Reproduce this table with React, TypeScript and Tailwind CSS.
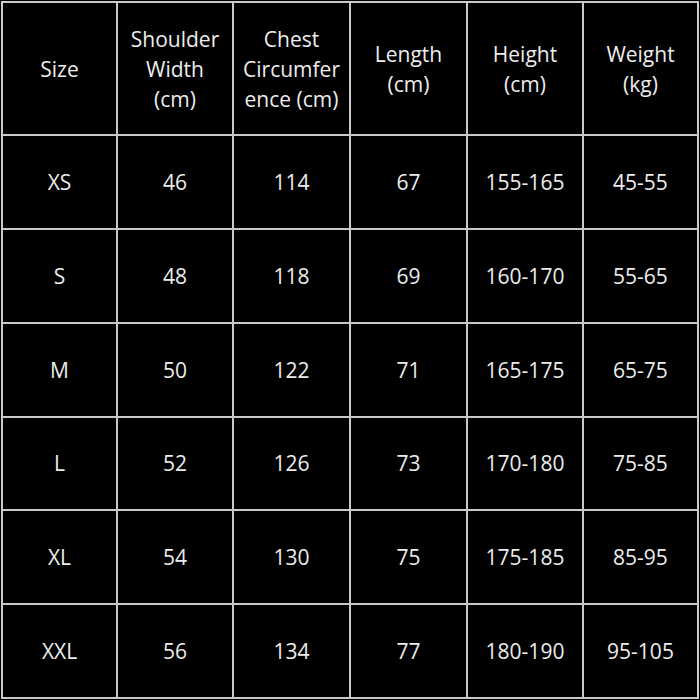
import React from "react";

const headers = [
  ["Size"],
  ["Shoulder", "Width", "(cm)"],
  ["Chest", "Circumfer", "ence (cm)"],
  ["Length", "(cm)"],
  ["Height", "(cm)"],
  ["Weight", "(kg)"],
];

const rows = [
  ["XS", "46", "114", "67", "155-165", "45-55"],
  ["S", "48", "118", "69", "160-170", "55-65"],
  ["M", "50", "122", "71", "165-175", "65-75"],
  ["L", "52", "126", "73", "170-180", "75-85"],
  ["XL", "54", "130", "75", "175-185", "85-95"],
  ["XXL", "56", "134", "77", "180-190", "95-105"],
];

const App = () => {
  return (
    <div className="w-[700px] h-[700px] bg-black p-[1px]">
      <div
        className="grid h-full w-full grid-cols-[113px_114px_115px_115px_114px_1fr] grid-rows-[131px_repeat(6,1fr)] gap-[2px] p-[2px] bg-[#c9c9c9] text-[21px] leading-[30px] text-[#ececec]"
        style={{ fontFamily: '"Open Sans", sans-serif' }}
      >
        {headers.map((lines) => (
          <div key={lines[0]} className="flex flex-col items-center justify-center bg-black text-center whitespace-nowrap">
            {lines.map((l) => (
              <span key={l}>{l}</span>
            ))}
          </div>
        ))}
        {rows.map((row) =>
          row.map((cell, i) => (
            <div key={row[0] + i} className="flex items-center justify-center bg-black text-center">
              {cell}
            </div>
          ))
        )}
      </div>
    </div>
  );
};

export default App;
